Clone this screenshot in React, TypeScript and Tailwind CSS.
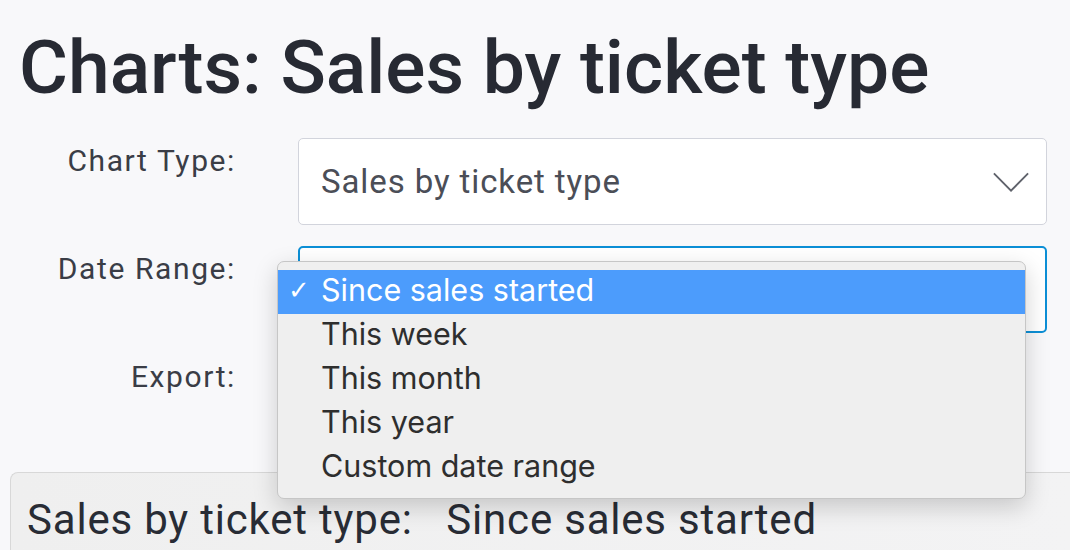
const dateOptions = [
  "Since sales started",
  "This week",
  "This month",
  "This year",
  "Custom date range",
];

function Chevron() {
  return (
    <svg viewBox="0 0 40 22" className="h-[22px] w-[38px]" fill="none" stroke="#5f626b" strokeWidth="2">
      <path d="M2 2l18 18L38 2" />
    </svg>
  );
}

function App() {
  const selected = 0;

  return (
    <div
      className="relative h-[550px] w-[1070px] overflow-hidden bg-[#f8f8fa] text-[#272a33]"
      style={{ fontFamily: "Roboto, 'Liberation Sans', sans-serif" }}
    >
      <h1 className="pl-[19px] pt-[25px] text-[75px] leading-[84px] font-medium tracking-[0px]">
        Charts: Sales by ticket type
      </h1>

      <div className="mt-[29px] grid grid-cols-[236px_749px] gap-x-[62px] gap-y-[21px]">
        <label className="pt-[5px] text-right text-[30px] leading-[36px] tracking-[1.6px] text-[#3a3d46]">Chart Type:</label>
        <div className="flex h-[87px] items-center justify-between rounded-[5px] border border-[#d2d4dc] bg-white pl-[22px] pr-[16px]">
          <span className="text-[33px] tracking-[0.9px] text-[#4b4e57]">Sales by ticket type</span>
          <Chevron />
        </div>

        <label className="pt-[5px] text-right text-[30px] leading-[36px] tracking-[1.6px] text-[#3a3d46]">Date Range:</label>
        <div className="h-[87px] rounded-[5px] border-2 border-[#0c8fd6] bg-white" />

        <label className="pt-[5px] text-right text-[30px] leading-[36px] tracking-[1.6px] text-[#3a3d46]">Export:</label>
        <div className="flex h-[87px] items-center pl-[420px]">
          <div className="h-[80px] w-[230px] rounded-full bg-[#e9ecee] blur-[18px]" />
        </div>
      </div>

      <div className="ml-[10px] mt-[31px] h-[120px] rounded-tl-[8px] border-l border-t border-[#d8d8d8] bg-gradient-to-r from-[#efefef] to-[#f3f3f4] pl-[16px] pt-[21px]">
        <p className="text-[42px] leading-[52px] tracking-[0.8px] text-[#282c35] whitespace-pre">Sales by ticket type:   Since sales started</p>
      </div>

      <ul
        className="absolute left-[277px] top-[261px] w-[749px] rounded-[7px] border border-[#c6c6c6] bg-[#efefef] py-[8px] shadow-[0_8px_24px_rgba(0,0,0,0.18)]"
        style={{ fontFamily: "Inter, 'Liberation Sans', sans-serif" }}
      >
        {dateOptions.map((opt, i) => (
          <li
            key={opt}
            className={
              i === selected
                ? "flex h-[44px] items-center bg-[#4c9cfc] pb-[4px] text-[30.5px] text-white"
                : "flex h-[44px] items-center pb-[4px] text-[30.5px] text-[#2e2e2e]"
            }
          >
            <span
              className="w-[43px] pl-[10px] text-[26px] font-bold"
              style={{ fontFamily: "'DejaVu Sans', sans-serif" }}
            >
              {i === selected ? "✓" : ""}
            </span>
            {opt}
          </li>
        ))}
      </ul>
    </div>
  );
}

export default App;
